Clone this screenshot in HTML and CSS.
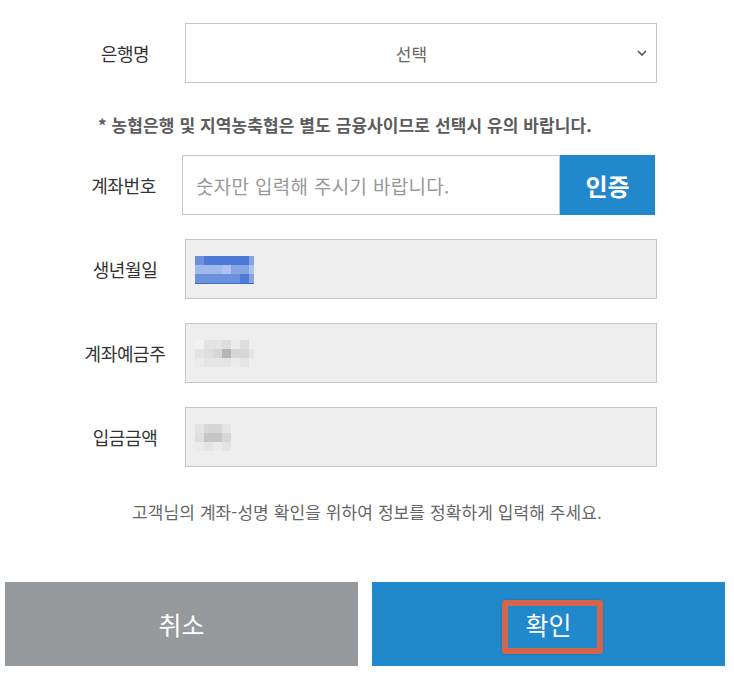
FILE: index.html
```html
<!DOCTYPE html>
<html lang="ko">
<head>
<meta charset="utf-8">
<title>계좌 확인</title>
<link rel="stylesheet" href="styles.css">
</head>
<body>
<div class="page">
  <div class="form">
    <div class="row">
      <div class="label">은행명</div>
      <div class="field select">
        <span class="select-text">선택</span>
        <svg class="chev" width="10" height="6" viewBox="0 0 10 6"><path d="M1 1 L5 5 L9 1" fill="none" stroke="#555" stroke-width="1.6"/></svg>
      </div>
    </div>
    <p class="note">* 농협은행 및 지역농축협은 별도 금융사이므로 선택시 유의 바랍니다.</p>
    <div class="row acct">
      <div class="label label-acct">계좌번호</div>
      <input class="acct-input" type="text" placeholder="숫자만 입력해 주시기 바랍니다.">
      <button class="auth-btn" type="button">인증</button>
    </div>
    <div class="row gap">
      <div class="label">생년월일</div>
      <div class="field readonly">
        <div class="mosaic m7 birth">
          <i class="b2"></i><i class="b1"></i><i class="b1"></i><i class="b1"></i><i class="b1"></i><i class="b1"></i><i class="b4"></i>
          <i class="b3"></i><i class="b3"></i><i class="b3"></i><i class="b5"></i><i class="b4"></i><i class="b4"></i><i class="b5"></i>
          <i class="b2"></i><i class="b2"></i><i class="b2"></i><i class="b2"></i><i class="b2"></i><i class="b1"></i><i class="b4"></i>
        </div>
      </div>
    </div>
    <div class="row gap">
      <div class="label">계좌예금주</div>
      <div class="field readonly">
        <div class="mosaic m7">
          <i class="g0"></i><i class="g2"></i><i class="g2"></i><i class="g3"></i><i class="g1"></i><i class="g3"></i><i class="gn"></i>
          <i class="g2"></i><i class="g3"></i><i class="g4"></i><i class="g6"></i><i class="g4"></i><i class="g4"></i><i class="g2"></i>
          <i class="g1"></i><i class="g2"></i><i class="g2"></i><i class="g2"></i><i class="g1"></i><i class="g2"></i><i class="gn"></i>
        </div>
      </div>
    </div>
    <div class="row gap">
      <div class="label">입금금액</div>
      <div class="field readonly">
        <div class="mosaic m4">
          <i class="g2"></i><i class="g4"></i><i class="g4"></i><i class="g2"></i>
          <i class="g3"></i><i class="g5"></i><i class="g5"></i><i class="g4"></i>
          <i class="g1"></i><i class="g2"></i><i class="g1"></i><i class="g2"></i>
        </div>
      </div>
    </div>
  </div>
  <p class="info">고객님의 계좌-성명 확인을 위하여 정보를 정확하게 입력해 주세요.</p>
  <div class="buttons">
    <button class="btn cancel" type="button">취소</button>
    <button class="btn confirm" type="button">확인<span class="highlight"></span></button>
  </div>
</div>
</body>
</html>
```

FILE: styles.css
```css
* { box-sizing: border-box; }
body {
  margin: 0;
  background: #fff;
  font-family: "Noto Sans CJK KR", "Noto Sans", sans-serif;
  color: #333;
}
.page { padding-top: 23px; }
.form {
  margin-left: 65px;
  width: 592px;
  display: flex;
  flex-direction: column;
}
.row {
  display: flex;
  align-items: center;
  height: 60px;
}
.row.gap { margin-top: 24px; }
.label {
  width: 120px;
  flex: none;
  text-align: center;
  font-size: 18px;
  letter-spacing: -0.4px;
  color: #333;
}
.field {
  flex: 1;
  height: 60px;
  border: 1px solid #c6c6c6;
}
.select {
  display: flex;
  align-items: center;
  background: #fff;
}
.select-text {
  flex: 1;
  text-align: center;
  font-size: 17px;
  color: #666;
}
.chev { margin-right: 9px; }
.note {
  margin: 0;
  padding: 22px 0 10px 33px;
  line-height: 40px;
  font-size: 17px;
  font-weight: 700;
  color: #5c5c5c;
  letter-spacing: 0.1px;
}
.label-acct { width: 117px; }
.acct-input {
  width: 378px;
  height: 60px;
  border: 1px solid #c6c6c6;
  padding: 0 0 0 13px;
  margin: 0;
  font-family: inherit;
  font-size: 19px;
  letter-spacing: 0.3px;
  color: #333;
  outline: none;
}
.acct-input::placeholder { color: #999; }
.auth-btn {
  width: 95px;
  height: 60px;
  border: none;
  margin: 0;
  background: #2288cc;
  color: #fff;
  font-family: inherit;
  font-size: 24px;
  font-weight: 700;
}
.readonly {
  background: #eeeeee;
  display: flex;
  align-items: center;
  padding-left: 9px;
}
.mosaic { display: grid; grid-auto-rows: 9px; }
.mosaic i { display: block; }
.m7 { grid-template-columns: repeat(6, 9px) 5px; }
.m4 { grid-template-columns: repeat(4, 9px); }
.birth { border-bottom: 1px solid #3b6cd0; margin-top: 2px; }
.b1 { background: #4c7ad6; }
.b2 { background: #6b91dd; }
.b3 { background: #a0b8eb; }
.b4 { background: #86a5e5; }
.b5 { background: #adc2ee; }
.gn { background: transparent; }
.g0 { background: #f2f2f2; }
.g1 { background: #ebebeb; }
.g2 { background: #e4e4e4; }
.g3 { background: #dedede; }
.g4 { background: #d6d6d6; }
.g5 { background: #c6c6c6; }
.g6 { background: #b6b6b6; }
.info {
  margin: 33px 0 0;
  line-height: 24px;
  text-align: center;
  font-size: 17px;
  color: #666;
  letter-spacing: 0.1px;
}
.buttons {
  display: flex;
  gap: 14px;
  margin-top: 58px;
  padding-left: 5px;
}
.btn {
  width: 353px;
  height: 84px;
  border: none;
  margin: 0;
  color: #fff;
  font-family: inherit;
  font-size: 25px;
  position: relative;
}
.cancel { background: #969a9d; }
.confirm { background: #2288cc; }
.highlight {
  position: absolute;
  left: 130px;
  top: 18px;
  width: 101px;
  height: 54px;
  border: 6px solid #d4644a;
  border-radius: 3px;
  box-shadow: 0 0 2px rgba(0,0,0,0.25);
}
```
